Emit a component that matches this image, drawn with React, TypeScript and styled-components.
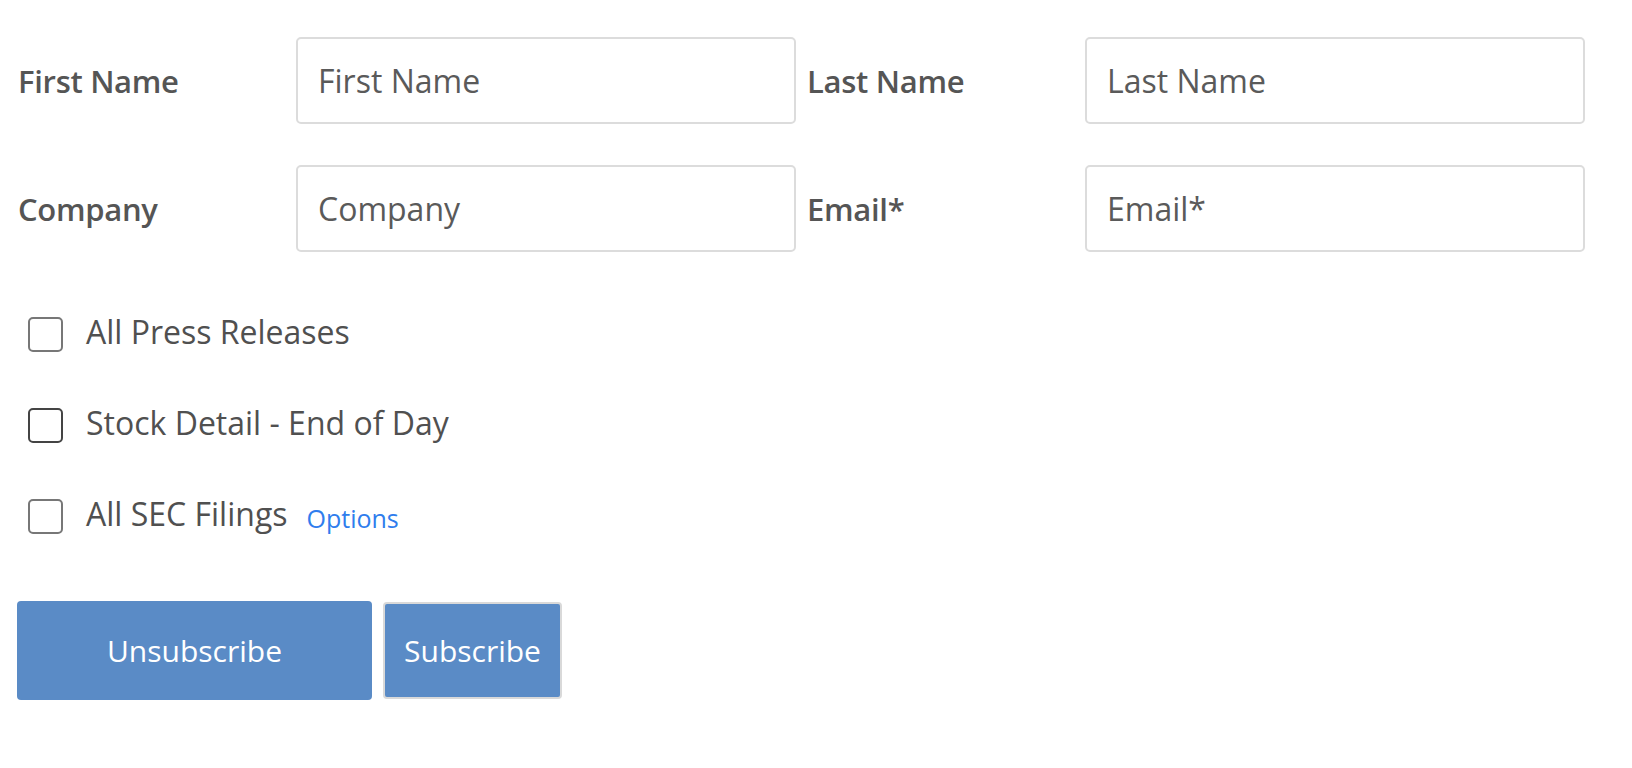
import React from "react";
import styled, { createGlobalStyle } from "styled-components";

const Global = createGlobalStyle`
  html, body { margin: 0; padding: 0; background: #fff; }
  body { font-family: "Open Sans", "Liberation Sans", sans-serif; color: #555; }
  * { box-sizing: border-box; }
`;

const Page = styled.form`
  padding: 37px 0 0 7px;
`;

const FieldGrid = styled.div`
  display: grid;
  grid-template-columns: 289px 500px 289px 500px;
  row-gap: 41px;
  align-items: center;
`;

const Label = styled.label`
  padding-left: 11px;
  font-size: 31px;
  font-weight: 600;
  color: #555;
  letter-spacing: -0.3px;
`;

const TextInput = styled.input`
  height: 87px;
  width: 500px;
  border: 2px solid #dcdcdc;
  border-radius: 5px;
  padding: 0 20px;
  font-family: "Open Sans", "Liberation Sans", sans-serif;
  font-size: 32px;
  color: #555;
  outline: none;
  &::placeholder { color: #5a5a5a; opacity: 1; }
`;

const Checks = styled.div`
  display: flex;
  flex-direction: column;
  gap: 56px;
  margin-top: 65px;
  padding-left: 21px;
`;

const CheckRow = styled.label`
  display: flex;
  align-items: center;
  gap: 23px;
  font-size: 32px;
  color: #505050;
  height: 35px;
`;

const CheckText = styled.span`
  margin-bottom: 6px;
`;

const Box = styled.span<{ $dark?: boolean }>`
  width: 35px;
  height: 35px;
  border: 2px solid ${(p) => (p.$dark ? "#444" : "#777")};
  border-radius: 5px;
  flex: none;
`;

const OptionsLink = styled.a`
  font-size: 25px;
  color: #2f7ded;
  text-decoration: none;
  margin-left: -4px;
  margin-top: 2px;
`;

const Buttons = styled.div`
  display: flex;
  align-items: center;
  gap: 11px;
  margin-top: 67px;
  padding-left: 10px;
`;

const Button = styled.button<{ $wide?: boolean; $bordered?: boolean }>`
  height: ${(p) => (p.$bordered ? "97px" : "99px")};
  width: ${(p) => (p.$wide ? "355px" : "179px")};
  background: #5a8bc6;
  color: #fff;
  border: ${(p) => (p.$bordered ? "2px solid #d9d9d9" : "none")};
  border-radius: 4px;
  font-family: "Open Sans", "Liberation Sans", sans-serif;
  font-size: 30px;
  padding: 0;
  cursor: pointer;
`;

const fields = [
  ["First Name", "Last Name"],
  ["Company", "Email*"],
];

export default function App() {
  return (
    <>
      <Global />
      <Page>
        <FieldGrid>
          {fields.flat().map((f) => (
            <React.Fragment key={f}>
              <Label>{f}</Label>
              <TextInput placeholder={f} />
            </React.Fragment>
          ))}
        </FieldGrid>
        <Checks>
          <CheckRow>
            <Box />
            <CheckText>All Press Releases</CheckText>
          </CheckRow>
          <CheckRow>
            <Box $dark />
            <CheckText>Stock Detail - End of Day</CheckText>
          </CheckRow>
          <CheckRow>
            <Box />
            <CheckText>All SEC Filings</CheckText>
            <OptionsLink href="#">Options</OptionsLink>
          </CheckRow>
        </Checks>
        <Buttons>
          <Button type="button" $wide>Unsubscribe</Button>
          <Button type="button" $bordered>Subscribe</Button>
        </Buttons>
      </Page>
    </>
  );
}
